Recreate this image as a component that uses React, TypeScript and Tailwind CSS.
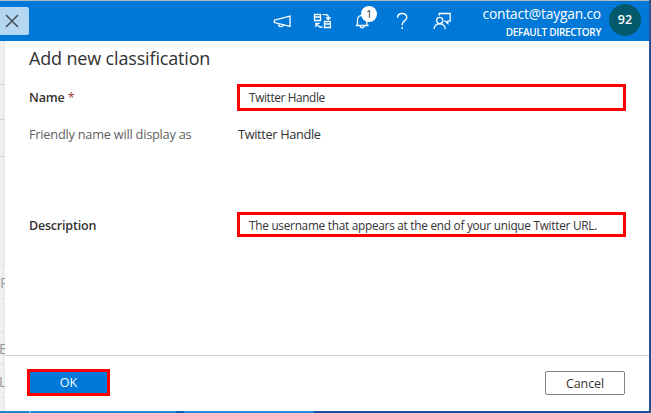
import type { ReactNode } from 'react';

function Icon({ label, className, children }: { label: string; className: string; children: ReactNode }) {
  return (
    <svg
      role="img"
      aria-label={label}
      viewBox="0 0 18 18"
      className={`h-[18px] w-[18px] shrink-0 ${className}`}
      fill="none"
      stroke="currentColor"
      strokeWidth="1.3"
    >
      {children}
    </svg>
  );
}

function Header() {
  return (
    <header className="flex h-[41px] shrink-0 border-t border-[#b5bcc0] bg-[#0078d7] text-white">
      <button aria-label="Close" className="mt-[6px] flex h-7 w-[29px] items-center justify-center rounded-r-[2px] bg-[#b3d7f3] pr-[5px] text-[#454a50]">
        <svg viewBox="0 0 14 14" className="h-[14px] w-[14px]" fill="none" stroke="currentColor" strokeWidth="1.5">
          <path d="M1 1l12 12M13 1L1 13" />
        </svg>
      </button>
      <nav className="ml-[244px] flex pt-[11px]">
        <Icon label="Announcements" className="">
          <path d="M17 4.2v10.2L1.4 10.6V8.2zM5.6 11.8c-.3 3.5 4.6 3.6 5 .9" />
        </Icon>
        <Icon label="Switch directory" className="ml-[22px]">
          <path d="M1.5 2.5h6v6h-6zM1.5 5h6M11.5 9.5h6v6h-6zM11.5 12h6M9.5 2.7h3.2q2.6 0 2.6 2.6v2M13 5.2l2.3 2.3 2.3-2.3M9.5 15H6.7L3.3 11.7M2.9 15v-3.7h3.8" />
        </Icon>
        <div className="relative ml-[22px]">
          <Icon label="Notifications" className="">
            <path d="M2.8 13.5h12.8M4.5 13.2V8c0-6.2 9.3-6.2 9.3 0v5.2M7.3 13.8c.2 2.8 3.6 2.8 3.8 0" />
          </Icon>
          <span className="absolute -top-[6px] left-[8px] flex h-4 w-4 items-center justify-center rounded-full bg-white font-['Noto_Sans',sans-serif] text-[10px] leading-none text-[#333]">1</span>
        </div>
        <Icon label="Help" className="ml-[22px]">
          <path d="M4.5 5.8c0-5.7 9.3-5.5 9.3-.6 0 3.5-4.6 3.8-4.6 7.3v.7" strokeWidth="1.4" />
          <circle cx="9.2" cy="16" r=".9" fill="currentColor" stroke="none" />
        </Icon>
        <Icon label="Feedback" className="ml-[22px]">
          <circle cx="6.7" cy="8.5" r="3.1" />
          <path d="M1.1 17c.2-7 10.9-7 11.1 0M6.2 3.5v-2h11v7.7h-2.4v2.3l-2.4-2.3h-1" />
        </Icon>
      </nav>
      <div className="ml-auto w-[125px] pt-[5px] text-right">
        <p className="text-[13.8px] leading-[16px] tracking-[-0.18px] whitespace-nowrap">contact@taygan.co</p>
        <p className="mt-[3px] text-[10px] leading-[14px] font-semibold tracking-[-0.3px] whitespace-nowrap">DEFAULT DIRECTORY</p>
      </div>
      <div className="mt-[3px] mr-2 ml-2 flex h-8 w-8 items-center justify-center rounded-full bg-[#035a6d] pt-px text-[12.5px] font-semibold">92</div>
    </header>
  );
}

function PageEdge() {
  return (
    <div className="flex w-[5px] shrink-0 flex-col overflow-hidden bg-linear-to-r from-[#f3f3f3] to-[#ebebeb] text-[14px] leading-5 text-[#999]">
      <div className="mt-[43px] h-[36px] border-t border-b border-[#d2d2d2]" />
      <div className="h-[37px] border-b border-[#d2d2d2]" />
      <div className="h-[109px] border-b border-[#e2e2e2]" />
      <div className="h-[33px] border-b border-[#e2e2e2] pt-[7px]">R</div>
      <div className="h-[33px] border-b border-[#e2e2e2]" />
      <div className="h-[33px] border-b border-[#e2e2e2] pt-[7px] -indent-px">E</div>
      <div className="h-[33px] border-b border-[#e2e2e2] pt-[7px] -indent-px">L</div>
    </div>
  );
}

export default function App() {
  return (
    <div className="flex h-[413px] w-[651px] overflow-hidden bg-[#2b5192] font-['Open_Sans','Noto_Sans',sans-serif]">
      <div className="flex w-[649px] flex-col">
        <Header />
        <div className="flex h-[370px] shrink-0">
          <PageEdge />
          <main className="flex w-[644px] flex-col bg-white text-[#323232]">
            <h1 className="mt-[5px] ml-6 h-6 text-[18px] leading-6 tracking-[-0.16px] whitespace-nowrap">Add new classification</h1>
            <div className="mt-[14px] ml-6 flex h-[27px] items-center">
              <label htmlFor="name" className="w-[208px] pt-px text-[12.5px] font-semibold tracking-[-0.15px]">
                Name <span className="font-normal text-[#a4373a]">*</span>
              </label>
              <div id="name" className="flex h-[27px] w-[389px] items-center border-[3px] border-[#ff0000] pl-[9px] text-[11.8px] tracking-[-0.36px] whitespace-nowrap">Twitter Handle</div>
            </div>
            <div className="mt-[14px] ml-6 flex h-5 items-center text-[12.8px] tracking-[-0.24px] whitespace-nowrap">
              <span className="w-[209px] text-[#616161]">Friendly name will display as</span>
              <span className="tracking-[-0.36px]">Twitter Handle</span>
            </div>
            <div className="mt-[67px] ml-6 flex h-[25px] items-center">
              <label htmlFor="description" className="w-[208px] pt-[3px] text-[12.5px] font-semibold tracking-[-0.2px]">Description</label>
              <div id="description" className="flex h-[25px] w-[389px] items-center border-[3px] border-[#ff0000] pt-[2px] pl-[9px] text-[11.8px] tracking-[-0.26px] whitespace-nowrap">The username that appears at the end of your unique Twitter URL.</div>
            </div>
            <footer className="mt-auto flex h-[56px] items-start justify-between border-t border-[#cfcfcf] pr-6 pl-[22px]">
              <button className="mt-[13px] h-[27px] w-[83px] border-[3px] border-[#ff0000] bg-[#0078d7] pt-px text-[12.5px] leading-[20px] text-white">OK</button>
              <button className="mt-[15px] h-6 w-20 rounded-[2px] border border-[#838383] pt-px text-[12.5px] leading-[21px] tracking-[-0.1px]">Cancel</button>
            </footer>
          </main>
        </div>
        <div className="flex h-[2px] shrink-0">
          <div className="w-[29px] bg-[#1c86cb]" />
          <div className="w-[2px] bg-[#43c5dc]" />
          <div className="w-[145px] bg-[#218bd9]" />
          <div className="w-[8px] bg-[#0c61b4]" />
          <div className="w-[130px] bg-[#238be0]" />
          <div className="flex-1 bg-[#1c4ea4]" />
        </div>
      </div>
      <div className="w-[2px] bg-[#2b5192]" />
    </div>
  );
}
